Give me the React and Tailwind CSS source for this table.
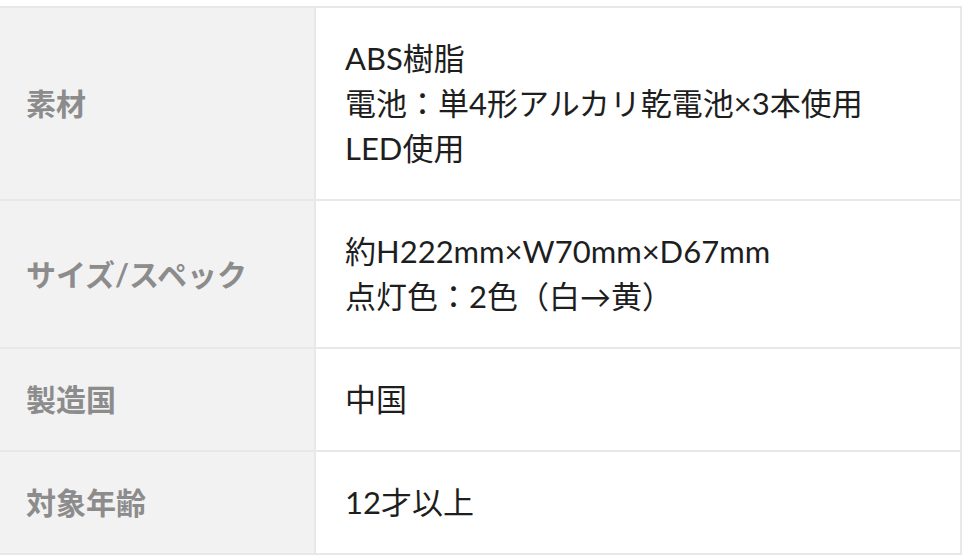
export default function App() {
  const rows = [
    { label: "素材", lines: ["ABS樹脂", "電池：単4形アルカリ乾電池×3本使用", "LED使用"] },
    { label: "サイズ/スペック", lines: ["約H222mm×W70mm×D67mm", "点灯色：2色（白→黄）"] },
    { label: "製造国", lines: ["中国"] },
    { label: "対象年齢", lines: ["12才以上"] },
  ];
  return (
    <div
      className="w-[968px] h-[556px] bg-white overflow-hidden pt-[6px]"
      style={{ fontFamily: 'Lato, "Noto Sans CJK JP", "Noto Sans", sans-serif' }}
    >
      <div className="w-[962px] border-t-2 border-r-2 border-[#e8e8e8]">
        {rows.map((r, i) => (
          <div key={i} className="flex border-b-2 border-[#e8e8e8]">
            <div className="w-[316px] shrink-0 bg-[#f2f2f2] border-r-2 border-[#e8e8e8] flex items-center pl-[26px] text-[30px] font-bold text-[#8c8c8c]">
              {r.label}
            </div>
            <div className="flex-1 py-[28px] pl-[29px] text-[31px] leading-[45px] text-[#1e1e1e]">
              {r.lines.map((l, j) => (
                <div key={j}>{l}</div>
              ))}
            </div>
          </div>
        ))}
      </div>
    </div>
  );
}
